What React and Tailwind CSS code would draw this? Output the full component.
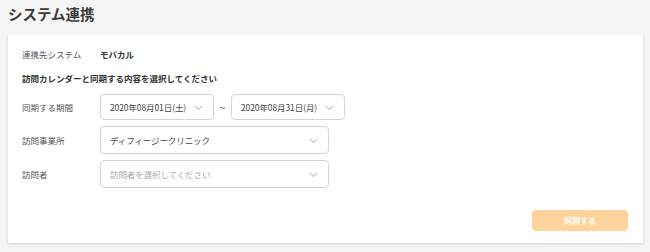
const font = { fontFamily: '"Noto Sans CJK JP", "Noto Sans", sans-serif' };

function Chevron() {
    return (
        <svg className="w-[11px] h-[11px] shrink-0" viewBox="0 0 12 12" fill="none" stroke="#bbb" strokeWidth="1.1" strokeLinecap="round" strokeLinejoin="round">
            <path d="M2 4.5l4 3.5 4-3.5" />
        </svg>
    );
}

function Select({ value, placeholder, className }) {
    return (
        <div className={`flex items-center justify-between bg-white border border-[#d4d4d4] rounded-[4px] pl-[9px] pr-[9px] ${className}`}>
            <span className={`text-[8.5px] whitespace-nowrap tracking-[-0.1px] ${value ? 'text-[#444]' : 'text-[#aaa]'}`}>{value || placeholder}</span>
            <Chevron />
        </div>
    );
}

export default function App() {
    return (
        <div className="w-[650px] h-[252px] bg-[#f5f5f5] pl-[8px] pr-[7px] overflow-hidden" style={font}>
            <h1 className="text-[14.5px] font-bold text-[#3a3a3a] leading-none pt-[7px] h-[34px]">システム連携</h1>

            <div className="bg-white h-[209px] shadow-[0_1px_3px_rgba(0,0,0,0.15)] pl-[14px] pr-[15px] pt-[14px] flex flex-col">
                {/* 連携先 */}
                <div className="flex items-center h-[13px] text-[8.5px]">
                    <span className="w-[78px] text-[#555]">連携先システム</span>
                    <span className="font-bold text-[#333]">モバカル</span>
                </div>

                <p className="mt-[11px] text-[8.5px] font-bold text-[#333] leading-[13px]">訪問カレンダーと同期する内容を選択してください</p>

                {/* 期間 */}
                <div className="flex items-center mt-[9px]">
                    <span className="w-[78px] text-[8.5px] text-[#555]">同期する期間</span>
                    <Select value="2020年08月01日(土)" className="w-[114px] h-[26px]" />
                    <span className="w-[17px] text-center text-[11px] text-[#666]">~</span>
                    <Select value="2020年08月31日(月)" className="w-[114px] h-[26px]" />
                </div>

                <div className="flex items-center mt-[6px]">
                    <span className="w-[78px] text-[8.5px] text-[#555]">訪問事業所</span>
                    <Select value="ディフィージークリニック" className="w-[229px] h-[28px]" />
                </div>

                <div className="flex items-center mt-[6px]">
                    <span className="w-[78px] text-[8.5px] text-[#555]">訪問者</span>
                    <Select placeholder="訪問者を選択してください" className="w-[229px] h-[28px]" />
                </div>

                <div className="flex justify-end mt-[22px]">
                    <button className="w-[96px] h-[21px] rounded-[4px] bg-[#ffd49c] text-white text-[8px] font-bold">
                        同期する
                    </button>
                </div>
            </div>
        </div>
    );
}
